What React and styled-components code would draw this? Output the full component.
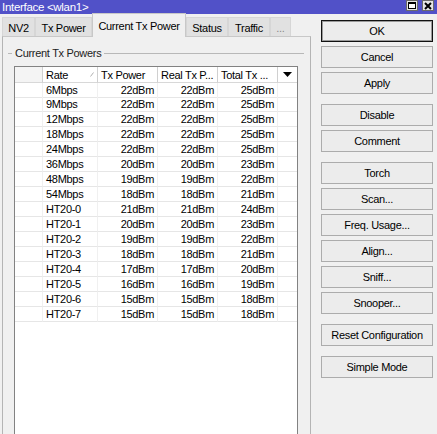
import React from 'react';
import styled, { createGlobalStyle } from 'styled-components';

const GlobalStyle = createGlobalStyle`
  html, body {
    margin: 0;
    padding: 0;
    background: #f0f0f0;
    overflow: hidden;
  }
  body {
    font-family: "Liberation Sans", Arial, sans-serif;
    font-size: 11px;
    letter-spacing: -0.3px;
    color: #000;
  }
`;

const Window = styled.div`
  width: 437px;
  height: 434px;
  overflow: hidden;
  display: flex;
  flex-direction: column;
  background: #f0f0f0;
`;

const TitleBar = styled.div`
  height: 14px;
  flex: none;
  background: #5151c8;
  color: #fff;
  font-size: 11.5px;
  line-height: 14px;
  padding-left: 2px;
  display: flex;
  align-items: flex-start;
  justify-content: space-between;
`;

const WinButtons = styled.div`
  display: flex;
  gap: 4px;
  margin-right: 3px;
`;

const WinButton = styled.div`
  width: 12px;
  height: 11px;
  box-sizing: border-box;
  background: #e6e6e6;
  border: 1px solid #6a6a6a;
  display: flex;
  align-items: center;
  justify-content: center;
`;

const Body = styled.div`
  display: flex;
  align-items: flex-start;
  padding-left: 2px;
`;

const LeftCol = styled.div`
  width: 309px;
  display: flex;
  flex-direction: column;
`;

const TabStrip = styled.div`
  height: 22px;
  display: flex;
  align-items: flex-end;
`;

const Tab = styled.div`
  box-sizing: border-box;
  width: ${p => p.$w}px;
  height: ${p => (p.$active ? 24 : 19)}px;
  margin-bottom: ${p => (p.$active ? -1 : 0)}px;
  position: relative;
  z-index: ${p => (p.$active ? 1 : 0)};
  background: ${p => (p.$active ? '#f0f0f0' : '#e1e1e1')};
  border: 1px solid ${p => (p.$active ? '#c8c8c8' : '#d6d6d6')};
  border-bottom: none;
  display: flex;
  align-items: center;
  justify-content: center;
  color: ${p => (p.$muted ? '#888' : '#000')};
  white-space: nowrap;
  padding-top: ${p => (p.$active ? 0 : 2)}px;
`;

const Panel = styled.div`
  box-sizing: border-box;
  height: 440px;
  border: 1px solid #b4b4b4;
  border-top-color: #c8c8c8;
  display: flex;
  flex-direction: column;
`;

const GroupLabel = styled.div`
  height: 14px;
  margin: 9px 6px 0 5px;
  display: flex;
  align-items: center;
  gap: 3px;
  color: #222;
`;

const GroupLine = styled.div`
  height: 1px;
  background: #b8b8b8;
  width: ${p => (p.$w ? `${p.$w}px` : 'auto')};
  flex: ${p => (p.$w ? 'none' : 1)};
`;

const Table = styled.div`
  margin: 6px 12px 0 11px;
  flex: 1;
  background: #fff;
  border: 1px solid #828282;
  display: grid;
  grid-template-columns: 28px 55px 60px 60px 60px 19px;
  grid-auto-rows: 15px;
  align-content: start;
`;

const HeadCell = styled.div`
  height: 16px;
  box-sizing: border-box;
  border-right: ${p => (p.$last ? 'none' : '1px solid #d0d0d0')};
  border-bottom: 1px solid #d8d8d8;
  background: ${p => (p.$blank ? '#f4f4f4' : '#fff')};
  padding: 0 3px;
  display: flex;
  align-items: center;
  justify-content: ${p => (p.$center ? 'center' : 'space-between')};
  white-space: nowrap;
  overflow: hidden;
`;

const Cell = styled.div`
  box-sizing: border-box;
  height: 15px;
  border-right: ${p => (p.$last ? 'none' : '1px solid #f0f0f0')};
  border-bottom: 1px solid #e6e6e6;
  padding: 0 3px 0 3px;
  display: flex;
  align-items: center;
  justify-content: ${p => (p.$right ? 'flex-end' : 'flex-start')};
  white-space: nowrap;
  margin-top: ${p => (p.$first ? 1 : 0)}px;
`;

const ButtonCol = styled.div`
  width: 112px;
  margin: 6px 0 0 10px;
  display: flex;
  flex-direction: column;
  gap: 4px;
`;

const Button = styled.div`
  box-sizing: border-box;
  height: 22px;
  margin-top: ${p => (p.$sep ? 6 : 0)}px;
  background: #ececec;
  border: 1px solid ${p => (p.$default ? '#111' : '#acacac')};
  box-shadow: ${p => (p.$default ? 'inset 0 0 0 1px #9a9a9a' : 'none')};
  display: flex;
  align-items: center;
  justify-content: center;
  white-space: nowrap;
`;

const tabs = [
  { label: 'NV2', w: 33 },
  { label: 'Tx Power', w: 57 },
  { label: 'Current Tx Power', w: 94, active: true },
  { label: 'Status', w: 42 },
  { label: 'Traffic', w: 42 },
  { label: '...', w: 21, muted: true },
];

const rows = [
  ['6Mbps', 22, 22, 25],
  ['9Mbps', 22, 22, 25],
  ['12Mbps', 22, 22, 25],
  ['18Mbps', 22, 22, 25],
  ['24Mbps', 22, 22, 25],
  ['36Mbps', 20, 20, 23],
  ['48Mbps', 19, 19, 22],
  ['54Mbps', 18, 18, 21],
  ['HT20-0', 21, 21, 24],
  ['HT20-1', 20, 20, 23],
  ['HT20-2', 19, 19, 22],
  ['HT20-3', 18, 18, 21],
  ['HT20-4', 17, 17, 20],
  ['HT20-5', 16, 16, 19],
  ['HT20-6', 15, 15, 18],
  ['HT20-7', 15, 15, 18],
];

const buttons = [
  { label: 'OK', def: true },
  { label: 'Cancel' },
  { label: 'Apply' },
  { label: 'Disable', sep: true },
  { label: 'Comment' },
  { label: 'Torch', sep: true },
  { label: 'Scan...' },
  { label: 'Freq. Usage...' },
  { label: 'Align...' },
  { label: 'Sniff...' },
  { label: 'Snooper...' },
  { label: 'Reset Configuration', sep: true },
  { label: 'Simple Mode', sep: true },
];

const App = () => {
  return (
    <Window>
      <GlobalStyle />
      <TitleBar>
        <span>Interface &lt;wlan1&gt;</span>
        <WinButtons>
          <WinButton>
            <svg width="8" height="7" viewBox="0 0 8 7">
              <rect x="0.5" y="0.5" width="7" height="6" fill="#fff" stroke="#000" />
              <rect x="0" y="0" width="8" height="2" fill="#000" />
            </svg>
          </WinButton>
          <WinButton>
            <svg width="8" height="8" viewBox="0 0 8 8">
              <path d="M1 1 L7 7 M7 1 L1 7" stroke="#000" strokeWidth="2" />
            </svg>
          </WinButton>
        </WinButtons>
      </TitleBar>
      <Body>
        <LeftCol>
          <TabStrip>
            {tabs.map(t => (
              <Tab key={t.label} $w={t.w} $active={t.active} $muted={t.muted}>
                {t.label}
              </Tab>
            ))}
          </TabStrip>
          <Panel>
            <GroupLabel>
              <GroupLine $w={4} />
              <span>Current Tx Powers</span>
              <GroupLine />
            </GroupLabel>
            <Table>
              <HeadCell $blank />
              <HeadCell>
                <span>Rate</span>
                <svg width="4" height="5" viewBox="0 0 4 5">
                  <path d="M0.5 4.5 L3.5 0.5" stroke="#b0b0b0" />
                </svg>
              </HeadCell>
              <HeadCell>Tx Power</HeadCell>
              <HeadCell>Real Tx P...</HeadCell>
              <HeadCell>Total Tx ...</HeadCell>
              <HeadCell $last $center>
                <svg width="9" height="5" viewBox="0 0 9 5">
                  <path d="M0 0 H9 L4.5 5 Z" fill="#000" />
                </svg>
              </HeadCell>
              {rows.map((r, i) => (
                <React.Fragment key={r[0]}>
                  <Cell $first={i === 0} />
                  <Cell $first={i === 0}>{r[0]}</Cell>
                  <Cell $first={i === 0} $right>{r[1]}dBm</Cell>
                  <Cell $first={i === 0} $right>{r[2]}dBm</Cell>
                  <Cell $first={i === 0} $right>{r[3]}dBm</Cell>
                  <Cell $first={i === 0} $last />
                </React.Fragment>
              ))}
            </Table>
          </Panel>
        </LeftCol>
        <ButtonCol>
          {buttons.map(b => (
            <Button key={b.label} $default={b.def} $sep={b.sep}>
              {b.label}
            </Button>
          ))}
        </ButtonCol>
      </Body>
    </Window>
  );
};

export default App;
